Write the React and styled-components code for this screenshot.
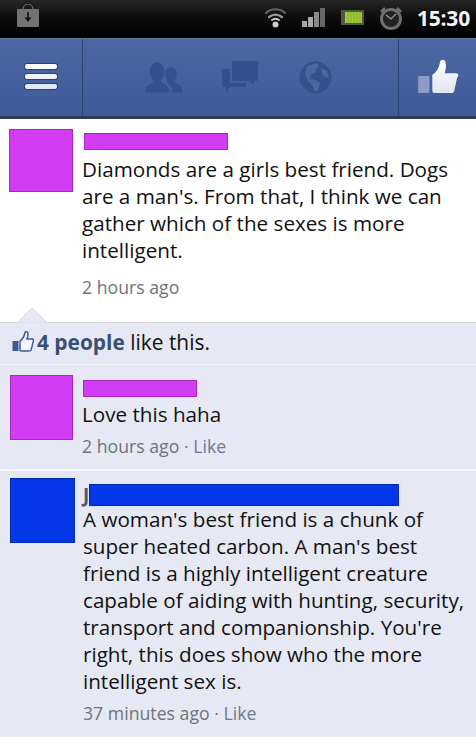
import React from "react";
import styled, { createGlobalStyle } from "styled-components";

const Global = createGlobalStyle`
  html, body { margin: 0; padding: 0; background: #fff; }
  body { font-family: "Open Sans", "Noto Sans", sans-serif; width: 476px; height: 747px; overflow: hidden; }
`;
const Page = styled.div`display:flex;flex-direction:column;width:476px;height:747px;overflow:hidden;`;
const StatusBar = styled.div`
  height: 38px; box-sizing: border-box; flex: none;
  background: linear-gradient(#262626 0, #0d0d0d 45%, #000 100%);
  display: flex; align-items: center; padding: 0 6px 3px 17px;
`;
const DownloadBadge = styled.svg`width:22px;height:23px;margin-top:-4px;`;
const StatusIcons = styled.div`margin-left:auto;display:flex;align-items:center;`;
const StatusIcon = styled.svg`flex:none;margin-right:${p => p.$gap}px;`;
const Clock = styled.span`color:#f4f4f4;font:700 21px "Open Sans",sans-serif;letter-spacing:-.2px;line-height:24px;`;
const NavBar = styled.div`
  height: 81px; flex:none; box-sizing:border-box; display:flex;
  border-top: 1px solid #68799f; border-bottom: 3px solid #2e3a5c;
  background: linear-gradient(#4d67a3, #3f5b97);
`;
const MenuCell = styled.div`
  width: 83px; box-sizing:border-box; border-right:1px solid #2c4273;
  display:flex;flex-direction:column;gap:5px;align-items:center;justify-content:center;padding:0 1px 2px 0;
`;
const MenuBar = styled.span`width:32px;height:5px;border-radius:2px;background:${p=>p.$c};box-shadow:0 0 0 1px #30436f;`;
const NavIcons = styled.div`flex:1;display:flex;align-items:center;padding:1px 0 1px 62px;`;
const NavIcon = styled.svg`flex:none;margin-right:${p=>p.$gap}px;`;
const LikeCell = styled.div`
  width:78px;box-sizing:border-box;border-left:1px solid #2c4273;display:flex;align-items:center;justify-content:center;padding:0 0 4px 0;
`;
const Post = styled.section`height:203px;flex:none;box-sizing:border-box;background:#fff;padding:10px 12px 0 9px;display:flex;gap:9px;position:relative;`;
const Avatar = styled.div`
  width:${p=>p.$w}px;height:${p=>p.$h}px;flex:none;background:${p=>p.$c};box-shadow:inset 0 0 0 1px ${p=>p.$edge};
`;
const Body = styled.div`min-width:0;flex:1;`;
const NameBar = styled.div`width:${p=>p.$w}px;height:${p=>p.$h}px;background:${p=>p.$c};box-shadow:inset 0 0 0 1px ${p=>p.$edge};`;
const PostName = styled.div`height:27px;padding-top:4px;box-sizing:border-box;padding-left:2px;`;
const Text = styled.p`
  margin:0;color:#111;font-size:20.65px;line-height:27px;white-space:pre;
`;
const Meta = styled.div`font-size:17.7px;line-height:24px;color:#6f737b;margin-top:${p=>p.$mt}px;`;
const MetaLike = styled.span`color:#6d7a93;`;
const Caret = styled.svg`position:absolute;left:17px;bottom:-1px;width:31px;height:16px;`;
const Likes = styled.div`
  height:43px;flex:none;box-sizing:border-box;background:#e6e9f4;border-top:1px solid #d2d4da;border-bottom:1px solid #f1f3f9;
  display:flex;align-items:center;padding:0 0 4px 12px;gap:3px;font-size:20.9px;color:#111;
`;
const LikeCount = styled.b`color:#3b4f75;font-weight:700;`;
const Comment = styled.section`
  height:${p=>p.$h}px;flex:none;box-sizing:border-box;background:#e6e9f4;display:flex;gap:${p=>p.$gap}px;padding:${p=>p.$top}px 0 0 10px;
  border-bottom:${p=>p.$line?"2px solid #f4f6fb":"none"};
`;
const Name1 = styled.div`height:26px;padding:5px 0 0 1px;box-sizing:border-box;`;
const Name2 = styled.div`display:flex;align-items:center;height:23px;margin-top:5px;color:#4a5a78;font-weight:700;font-size:19px;padding-left:0;`;
const Foot = styled.div`height:10px;flex:none;background:#fff;`;

export default function App(){
  return <Page><Global/>
    <StatusBar>
      <DownloadBadge viewBox="0 0 22 23">
        <path d="M6 8V5a5 5 0 0 1 10 0v3" fill="none" stroke="#777" strokeWidth="1"/>
        <rect x="0" y="5" width="22" height="18" rx="1" fill="#737373"/>
        <path d="M11 8v7" stroke="#111" strokeWidth="1.600"/>
        <path d="M7.500 13.500h7L11 18z" fill="#111"/>
      </DownloadBadge>
      <StatusIcons>
        <StatusIcon $gap={15} width="23" height="23" viewBox="0 0 23 23">
          <g fill="none" strokeLinecap="round"><path d="M2 7c5-5 14-5 19 0" stroke="#666" strokeWidth="2.200"/><path d="M5 11c4-3 9-3 13 0" stroke="#999" strokeWidth="2.200"/><path d="M8 14c2-1.500 5-1.500 7 0" stroke="#ccc" strokeWidth="2"/></g><circle cx="11.500" cy="18.500" r="3" fill="#ccc"/>
        </StatusIcon>
        <StatusIcon $gap={15} width="24" height="21" viewBox="0 0 24 21">
          <rect x="0" y="14" width="5" height="6" fill="#aaa"/><rect x="6" y="10" width="5" height="10" fill="#aaa"/><rect x="12" y="5" width="5" height="15" fill="#888"/><rect x="18" y="1" width="5" height="19" fill="#666"/>
        </StatusIcon>
        <StatusIcon $gap={15} width="23" height="17" viewBox="0 0 23 17">
          <rect x="0" y="1" width="23" height="15" fill="#4e5a40"/><rect x="4" y="3" width="17" height="11" fill="#9fc93a"/><path d="M7 3v11M10 3v11M13 3v11M16 3v11M19 3v11" stroke="#86ad2c"/>
        </StatusIcon>
        <StatusIcon $gap={14} width="24" height="24" viewBox="0 0 24 24">
          <circle cx="12" cy="13" r="9.500" fill="#222" stroke="#6f6f6f" strokeWidth="3"/><path d="M7 9l5 4 5-5" fill="none" stroke="#999" strokeWidth="1.300"/><path d="M2 6l4-4M22 6l-4-4" stroke="#6f6f6f" strokeWidth="2.500"/>
        </StatusIcon>
        <Clock>15:30</Clock>
      </StatusIcons>
    </StatusBar>
    <NavBar>
      <MenuCell>
        <MenuBar $c="#fafbfe"/><MenuBar $c="#eef2fb"/><MenuBar $c="#dfe6f5"/>
      </MenuCell>
      <NavIcons>
        <NavIcon $gap={38} width="39" height="33" viewBox="0 0 40 33" fill="#35508c">
          <path d="M0 32c0-6 3-8 8-10 1-1 1-2 0-4-2-2-3-5-3-8 0-5 3-9 7-9s8 4 8 9c0 3-1 6-3 8-1 2-1 3 0 4 5 2 8 4 8 10z"/>
          <path d="M28 32c0-5-2-8-5-10 0-1 0-2-.500-3-1-2-2-4-2-6 0-4 3-7 6-7s6 3 6 7c0 2-1 5-2 6-1 1-1 2 0 3 4 1 8 3 8 10z"/>
        </NavIcon>
        <NavIcon $gap={41} width="36" height="33" viewBox="0 0 36 33" fill="#35508c">
          <path d="M10 0h26v20h-4v4l-5-4H10z"/>
          <path d="M0 8h8v14h16v4H8l-4 6v-6H0z"/>
        </NavIcon>
        <NavIcon $gap={0} width="33" height="33" viewBox="0 0 33 33">
          <circle cx="16.500" cy="16.500" r="16" fill="#35508c"/>
          <path d="M8 5l9-3 3 3-3 3-1 4-4 1-1 5 5 1 5 3-2 7-3 2-3-7-4-4-3-7zM22 7l6 3 2 7-4-1-3-3z" fill="#4c66a0"/>
        </NavIcon>
      </NavIcons>
      <LikeCell>
        <svg width="42" height="36" viewBox="0 0 44 38">
          <defs><linearGradient id="thumbFill" x1="0" y1="0" x2="0" y2="1"><stop offset="0" stopColor="#ffffff"/><stop offset="1" stopColor="#dfe5f2"/></linearGradient></defs>
          <rect x="1" y="19" width="12" height="18" rx="1" fill="#8c9cc4"/>
          <path d="M16 18c4-3 7-7 8-13 0-3 5-5 6 0 1 4 0 8-1 11h12c3 0 3 4 1 5-1 5-2 10-3 14-1 2-2 2-4 2H19c-2 0-3-1-3-3z" fill="url(#thumbFill)"/>
        </svg>
      </LikeCell>
    </NavBar>
    <Post>
      <Avatar $w={64} $h={63} $c="#d23cf2" $edge="#a927c3"/>
      <Body>
        <PostName><NameBar $w={144} $h={17} $c="#d23cf2" $edge="#a927c3"/></PostName>
        <Text>{"Diamonds are a girls best friend. Dogs\nare a man's. From that, I think we can\ngather which of the sexes is more\nintelligent."}</Text>
        <Meta $mt={11}>2 hours ago</Meta>
      </Body>
      <Caret viewBox="0 0 31 16"><path d="M0 16L15 1l16 15z" fill="#e6e9f4" stroke="#d8dae0"/></Caret>
    </Post>
    <Likes>
      <svg width="22" height="21" viewBox="0 0 22 21" style={{flex:"none"}}>
        <rect x="0.500" y="10" width="6" height="10" fill="#3b5998"/>
        <path d="M8 10c3-2 4-4 5-8 0-2 3-2 3 1 0 2-.500 3-1 5h5c2 0 2 2 1 3-.500 3-1 5-2 8-.500 1-1 1-2 1H9c-1 0-1-1-1-1z" fill="#f3f5fb" stroke="#3b5998" strokeWidth="1.500"/>
      </svg>
      <span><LikeCount>4 people</LikeCount> like this.</span>
    </Likes>
    <Comment $h={106} $gap={9} $top={10} $line>
      <Avatar $w={63} $h={65} $c="#d23cf2" $edge="#a927c3"/>
      <Body>
        <Name1><NameBar $w={114} $h={17} $c="#d23cf2" $edge="#a927c3"/></Name1>
        <Text>Love this haha</Text>
        <Meta $mt={6}>2 hours ago · <MetaLike>Like</MetaLike></Meta>
      </Body>
    </Comment>
    <Comment $h={266} $gap={8} $top={7}>
      <Avatar $w={65} $h={65} $c="#0437e8" $edge="#032ab0"/>
      <Body>
        <Name2>J<NameBar $w={310} $h={22} $c="#0437e8" $edge="#032ab0"/></Name2>
        <Text>{"A woman's best friend is a chunk of\nsuper heated carbon. A man's best\nfriend is a highly intelligent creature\ncapable of aiding with hunting, security,\ntransport and companionship. You're\nright, this does show who the more\nintelligent sex is."}</Text>
        <Meta $mt={6}>37 minutes ago · <MetaLike>Like</MetaLike></Meta>
      </Body>
    </Comment>
    <Foot/>
  </Page>;
}
